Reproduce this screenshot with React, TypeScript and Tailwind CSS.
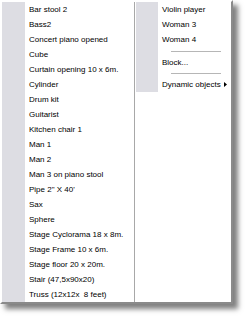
const left = [
  'Bar stool 2',
  'Bass2',
  'Concert piano opened',
  'Cube',
  'Curtain opening 10 x 6m.',
  'Cylinder',
  'Drum kit',
  'Guitarist',
  'Kitchen chair 1',
  'Man 1',
  'Man 2',
  'Man 3 on piano stool',
  'Pipe 2" X 40\'',
  'Sax',
  'Sphere',
  'Stage Cyclorama 18 x 8m.',
  'Stage Frame 10 x 6m.',
  'Stage floor 20 x 20m.',
  'Stair (47,5x90x20)',
  'Truss (12x12x  8 feet)',
]

function Item({ label, gutter, arrow }: { label: string; gutter: string; arrow?: boolean }) {
  return (
    <div className="flex h-[15px] items-center">
      <div className={`${gutter} h-full shrink-0 bg-[#dddde3]`} />
      <span className="pl-[4px] whitespace-pre leading-none">{label}</span>
      {arrow && (
        <svg className="ml-[3px]" width="3" height="5" viewBox="0 0 3 5">
          <path d="M0 0 L3 2.5 L0 5 Z" fill="#000" />
        </svg>
      )}
    </div>
  )
}

function Separator({ h }: { h: string }) {
  return (
    <div className={`flex ${h}`}>
      <div className="w-[22px] h-full shrink-0 bg-[#dddde3]" />
      <div className="flex flex-1 items-center pl-[13px]">
        <div className="w-[50px] border-t border-[#b6b6b6]" />
      </div>
    </div>
  )
}

export default function App() {
  return (
    <div className="w-[246px] h-[316px] bg-white">
      <div
        className="flex w-[233px] h-[304px] bg-white border-l-2 border-t-2 border-r-2 border-b-2 border-l-white border-t-white border-r-[#8a8a8a] border-b-[#8a8a8a] shadow-[5px_5px_5px_rgba(0,0,0,0.5)] text-[8px] text-black"
        style={{ fontFamily: '"Liberation Sans", Arial, sans-serif' }}
      >
        <div className="flex flex-col w-[132px] shrink-0">
          {left.map((l) => (
            <Item key={l} label={l} gutter="w-[23px]" />
          ))}
        </div>
        <div className="w-px shrink-0 bg-[#a8a8a8]" />
        <div className="w-px shrink-0 bg-white" />
        <div className="flex flex-col flex-1">
          <Item label="Violin player" gutter="w-[22px]" />
          <Item label="Woman 3" gutter="w-[22px]" />
          <Item label="Woman 4" gutter="w-[22px]" />
          <Separator h="h-[8px]" />
          <Item label="Block..." gutter="w-[22px]" />
          <Separator h="h-[7px]" />
          <Item label="Dynamic objects" gutter="w-[22px]" arrow />
        </div>
      </div>
    </div>
  )
}
